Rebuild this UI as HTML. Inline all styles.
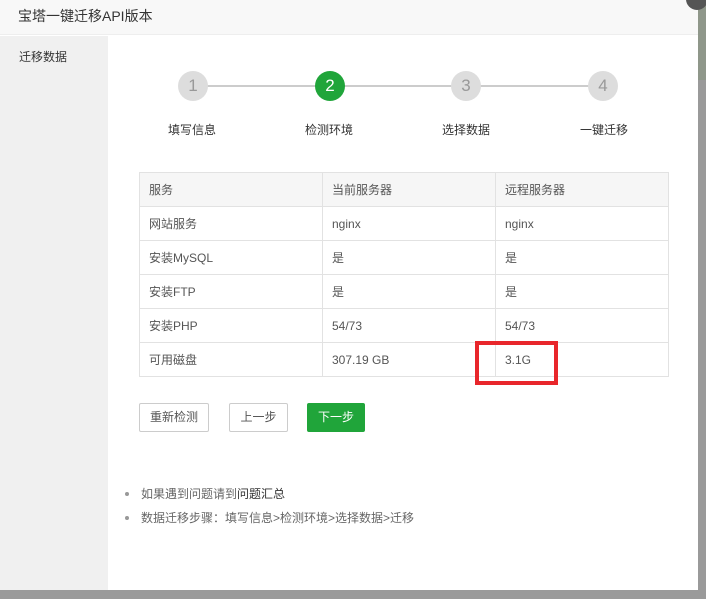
<!DOCTYPE html>
<html><head><meta charset="utf-8"><style>
*{margin:0;padding:0;box-sizing:border-box}
body{width:706px;height:599px;background:#9a9a9a;position:relative;overflow:hidden;font-family:"Liberation Sans","Noto Sans CJK SC",sans-serif;font-size:12px;color:#555}
.dlg{position:absolute;left:0;top:0;width:698px;height:590px;background:#fff}
.hd{position:absolute;left:0;top:0;width:698px;height:35px;background:#f8f8f8;border-bottom:1px solid #eee;font-size:14px;color:#333;line-height:32px;padding-left:18px}
.sb{position:absolute;left:0;top:36px;width:108px;height:554px;background:#f0f0f0;padding:12px 0 0 19px;color:#333}
.line{position:absolute;top:85px;left:193px;width:410px;height:2px;background:#ccc}
.c{position:absolute;top:71px;width:30px;height:30px;border-radius:50%;background:#ddd;color:#999;font-size:17px;text-align:center;line-height:30px}
.lbl{position:absolute;top:121px;width:80px;text-align:center;color:#333}
table{position:absolute;left:139px;top:172px;width:530px;border-collapse:collapse}
td{border:1px solid #e2e2e2;height:34px;padding-left:9px;color:#555}
tr:first-child td{background:#f6f6f6}
.btn{position:absolute;top:403px;height:29px;border:1px solid #ccc;border-radius:2px;background:#fff;color:#555;text-align:center;line-height:27px}
ul{position:absolute;left:125px;top:485px;list-style:none;color:#666}
li{height:24px;line-height:18px;position:relative;padding-left:16px}
li:before{content:"";position:absolute;left:0;top:7px;width:4px;height:4px;border-radius:50%;background:#999}
</style></head><body>
<div style="position:absolute;left:698px;top:0;width:8px;height:80px;background:#8f978a"></div>
<div class="dlg">
<div class="hd">宝塔一键迁移API版本</div>
<div class="sb">迁移数据</div>
<div class="line"></div>
<div class="c" style="left:178px">1</div>
<div class="c" style="left:315px;background:#20a53a;color:#fff">2</div>
<div class="c" style="left:451px">3</div>
<div class="c" style="left:588px">4</div>
<div class="lbl" style="left:152px">填写信息</div>
<div class="lbl" style="left:289px">检测环境</div>
<div class="lbl" style="left:426px">选择数据</div>
<div class="lbl" style="left:564px">一键迁移</div>
<table>
<tr><td style="width:183px">服务</td><td style="width:173px">当前服务器</td><td>远程服务器</td></tr>
<tr><td>网站服务</td><td>nginx</td><td>nginx</td></tr>
<tr><td>安装MySQL</td><td>是</td><td>是</td></tr>
<tr><td>安装FTP</td><td>是</td><td>是</td></tr>
<tr><td>安装PHP</td><td>54/73</td><td>54/73</td></tr>
<tr><td>可用磁盘</td><td>307.19 GB</td><td>3.1G</td></tr>
</table>
<div style="position:absolute;left:475px;top:341px;width:83px;height:44px;border:4px solid #e8262b"></div>
<div class="btn" style="left:139px;width:70px">重新检测</div>
<div class="btn" style="left:229px;width:59px">上一步</div>
<div class="btn" style="left:307px;width:58px;background:#20a53a;border-color:#20a53a;color:#fff">下一步</div>
<ul><li>如果遇到问题请到<span style="color:#333">问题汇总</span></li><li>数据迁移步骤：填写信息&gt;检测环境&gt;选择数据&gt;迁移</li></ul>
</div>
<div style="position:absolute;left:686px;top:-12px;width:22px;height:22px;border-radius:50%;background:#555"></div>
</body></html>
